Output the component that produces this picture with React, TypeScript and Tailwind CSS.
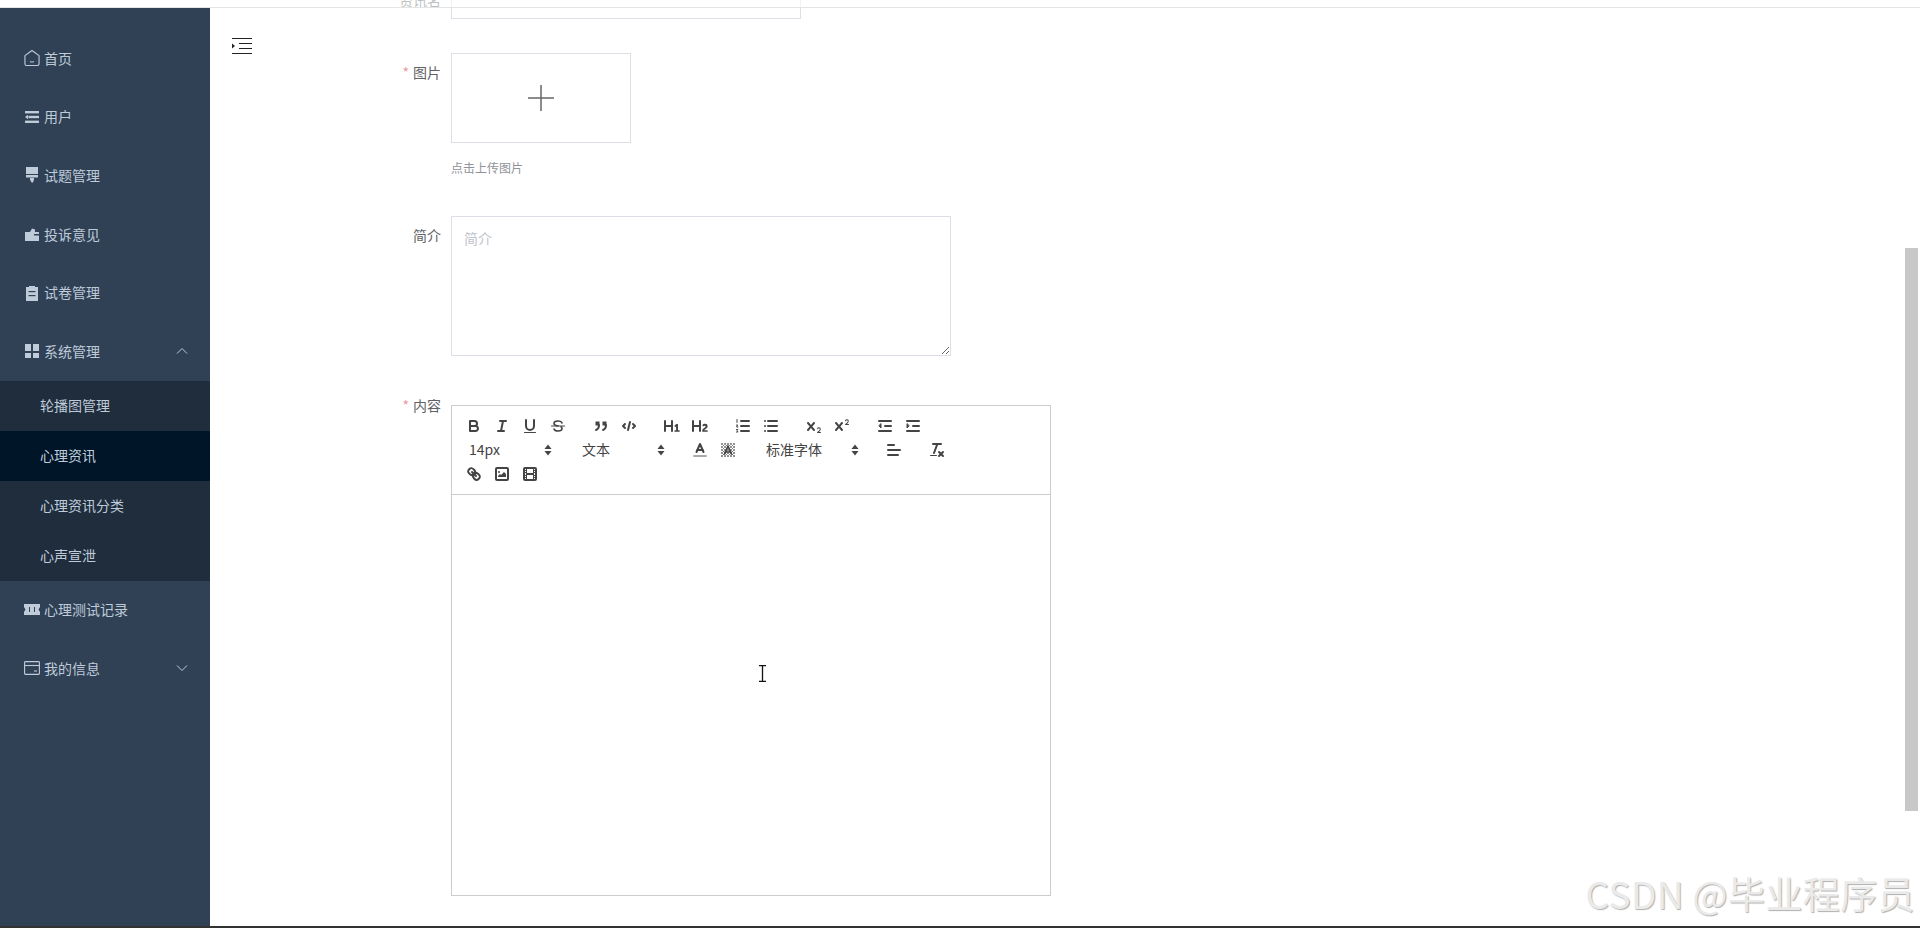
import React from "react";

const S = "#444";
const cn = "Noto Sans CJK SC";

function Q({ children, w = 18, h = 18 }: { children: React.ReactNode; w?: number; h?: number }) {
  return (
    <svg width={w} height={h} viewBox="0 0 18 18" fill="none" stroke={S} strokeWidth={2} strokeLinecap="round" strokeLinejoin="round">
      {children}
    </svg>
  );
}

const fill = { fill: S, stroke: "none" };
const thin = { strokeWidth: 1 };

const icons: Record<string, React.ReactNode> = {
  bold: (<><path d="M5,4H9.5A2.5,2.5,0,0,1,12,6.5v0A2.5,2.5,0,0,1,9.5,9H5V4Z" /><path d="M5,9h5.5A2.5,2.5,0,0,1,13,11.5v0A2.5,2.5,0,0,1,10.5,14H5V9Z" /></>),
  italic: (<><line x1="7" x2="13" y1="4" y2="4" /><line x1="5" x2="11" y1="14" y2="14" /><line x1="8" x2="10" y1="14" y2="4" /></>),
  underline: (<><path d="M5,3V9a4,4,0,0,0,4,4H9a4,4,0,0,0,4-4V3" /><rect x="3" y="15" width="12" height="1" rx=".5" {...fill} /></>),
  strike: (<><line x1="15.5" x2="2.5" y1="9" y2="9" strokeWidth={1.2} /><path d="M13 6C12.6 4.700 11 4 9 4 6.800 4 5 5 5 6.500c0 1.200 1 2 4 2.500M5 12c.4 1.300 2 2 4 2 2.200 0 4-1 4-2.500 0-.7-.3-1.300-1-1.700" strokeWidth={1.600} /></>),
  quote: (<><rect x="3.500" y="4.500" width="4" height="4" {...fill} /><rect x="10.500" y="4.500" width="4" height="4" {...fill} /><path d="M7,8c0,4-3,5-3,5" /><path d="M14,8c0,4-3,5-3,5" /></>),
  code: (<><polyline points="5 7 3 9 5 11" /><polyline points="13 7 15 9 13 11" /><line x1="10" x2="8" y1="5" y2="13" /></>),
  h1: (<path {...fill} d="M10,4V14a1,1,0,0,1-2,0V10H3v4a1,1,0,0,1-2,0V4A1,1,0,0,1,3,4V8H8V4a1,1,0,0,1,2,0Zm6.06787,9.209H14.98975V7.59863a.54085.54085,0,0,0-.605-.60547h-.62744a1.01119,1.01119,0,0,0-.748.29688L11.645,8.56641a.5435.5435,0,0,0-.022.8584l.28613.30762a.53861.53861,0,0,0,.84717.0332l.09912-.08789a1.2137,1.2137,0,0,0,.2417-.35254h.02246s-.01123.30859-.01123.60547V13.209H12.041a.54085.54085,0,0,0-.605.60547v.43945a.54085.54085,0,0,0,.605.60547h4.02686a.54085.54085,0,0,0,.605-.60547v-.43945A.54085.54085,0,0,0,16.06787,13.209Z" />),
  h2: (<path {...fill} d="M16.73975,13.81445v.43945a.54085.54085,0,0,1-.605.60547H11.855a.58392.58392,0,0,1-.64893-.60547V14.0127c0-2.90527,3.39941-3.42187,3.39941-4.55469a.77675.77675,0,0,0-.84717-.78125,1.17684,1.17684,0,0,0-.83594.38477c-.2749.26367-.561.374-.85791.13184l-.4292-.34082c-.30811-.24219-.38525-.51758-.1543-.81445a2.97155,2.97155,0,0,1,2.45361-1.17676,2.45393,2.45393,0,0,1,2.68408,2.40918c0,2.45312-3.1792,2.92676-3.27832,3.93848h2.79443A.54085.54085,0,0,1,16.73975,13.81445ZM9,3A.99974.99974,0,0,0,8,4V8H3V4A1,1,0,0,0,1,4V14a1,1,0,0,0,2,0V10H8v4a1,1,0,0,0,2,0V4A.99974.99974,0,0,0,9,3Z" />),
  ol: (<><line x1="7" x2="15" y1="4" y2="4" /><line x1="7" x2="15" y1="9" y2="9" /><line x1="7" x2="15" y1="14" y2="14" /><path d="M3 2.500v3M2.500 8h1.200l-1.200 2h1.400M2.500 12.500h1.400l-.7 1 .7 1.500H2.500" {...thin} /></>),
  ul: (<><line x1="6" x2="15" y1="4" y2="4" /><line x1="6" x2="15" y1="9" y2="9" /><line x1="6" x2="15" y1="14" y2="14" /><line x1="3" x2="3" y1="4" y2="4" /><line x1="3" x2="3" y1="9" y2="9" /><line x1="3" x2="3" y1="14" y2="14" /></>),
  sub: (<><path {...fill} d="M15.5,15H13.861a3.858,3.858,0,0,0,1.914-2.975,1.8,1.8,0,0,0-1.6-1.751A1.921,1.921,0,0,0,12.021,11.7a0.50013,0.50013,0,1,0,.957.291h0a0.914,0.914,0,0,1,1.053-.725,0.81,0.81,0,0,1,.744.762c0,1.076-1.16971,1.86982-1.93971,2.43082A1.45639,1.45639,0,0,0,12,15.5a0.5,0.5,0,0,0,.5.5h3A0.5,0.5,0,0,0,15.5,15Z" /><path {...fill} d="M9.65,5.241a1,1,0,0,0-1.409.108L6,7.964,3.759,5.349A1,1,0,0,0,2.192,6.59178Q2.21541,6.6213,2.241,6.649L4.684,9.5,2.241,12.35A1,1,0,0,0,3.71,13.70722q0.02557-.02768.049-0.05722L6,11.036,8.241,13.65a1,1,0,1,0,1.567-1.24277Q9.78459,12.3777,9.759,12.35L7.316,9.5,9.759,6.651A1,1,0,0,0,9.65,5.241Z" /></>),
  sup: (<><path {...fill} d="M15.5,7H13.861a4.015,4.015,0,0,0,1.914-2.975,1.8,1.8,0,0,0-1.6-1.751A1.922,1.922,0,0,0,12.021,3.7a0.5,0.5,0,1,0,.957.291,0.917,0.917,0,0,1,1.053-.725,0.81,0.81,0,0,1,.744.762c0,1.077-1.164,1.925-1.934,2.486A1.423,1.423,0,0,0,12,7.5a0.5,0.5,0,0,0,.5.5h3A0.5,0.5,0,0,0,15.5,7Z" /><path {...fill} d="M9.651,5.241a1,1,0,0,0-1.41.108L6,7.964,3.759,5.349a1,1,0,1,0-1.519,1.3L4.683,9.5,2.241,12.35a1,1,0,1,0,1.519,1.3L6,11.036l2.241,2.616a1,1,0,0,0,1.519-1.3L7.317,9.5,9.759,6.651A1,1,0,0,0,9.651,5.241Z" /></>),
  outdent: (<><line x1="3" x2="15" y1="14" y2="14" /><line x1="3" x2="15" y1="4" y2="4" /><line x1="9" x2="15" y1="9" y2="9" /><polygon points="5 7 5 11 3 9" fill={S} strokeWidth={1} /></>),
  indent: (<><line x1="3" x2="15" y1="14" y2="14" /><line x1="3" x2="15" y1="4" y2="4" /><line x1="9" x2="15" y1="9" y2="9" /><polygon points="3 7 3 11 5 9" fill={S} strokeWidth={1} /></>),
  color: (<><line x1="3" x2="15" y1="15" y2="15" stroke="#aaa" /><polyline points="5.500 11 9 3 12.500 11" /><line x1="11.630" x2="6.380" y1="9" y2="9" /></>),
  bg: (<>
    <g stroke="#777" strokeWidth={0.8} strokeLinecap="butt">
      <path d="M2 2l14 14M2 5l11 11M2 8l8 8M2 11l5 5M2 14l2 2M5 2l11 11M8 2l8 8M11 2l5 5M14 2l2 2M16 2L2 16M13 2L2 13M10 2L2 10M7 2L2 7M4 2L2 4M16 5L5 16M16 8l-8 8M16 11l-5 5M16 14l-2 2" />
    </g>
    <polyline points="5.500 13 9 5 12.500 13" strokeWidth={1.700} />
    <line x1="11.630" x2="6.380" y1="11" y2="11" strokeWidth={1.700} />
  </>),
  align: (<><line x1="3" x2="15" y1="9" y2="9" /><line x1="3" x2="13" y1="14" y2="14" /><line x1="3" x2="9" y1="4" y2="4" /></>),
  clean: (<><line x1="5" x2="13" y1="3" y2="3" /><line x1="6" x2="9.350" y1="12" y2="3" /><line x1="11" x2="15" y1="11" y2="15" /><line x1="15" x2="11" y1="11" y2="15" /><rect x="2" y="14" width="7" height="1" rx=".5" {...fill} /></>),
  link: (<><line x1="7" x2="11" y1="7" y2="11" /><path d="M8.900,4.577a3.476,3.476,0,0,1,.36,4.679A3.476,3.476,0,0,1,4.577,8.900C3.185,7.500,2.035,6.400,4.217,4.217S7.500,3.185,8.900,4.577Z" /><path d="M13.423,9.100a3.476,3.476,0,0,0-4.679-.36,3.476,3.476,0,0,0,.36,4.679c1.392,1.392,2.500,2.542,4.679.36S14.815,10.500,13.423,9.100Z" /></>),
  image: (<><rect x="3" y="3" width="12" height="12" rx="1" /><circle cx="6" cy="7" r="1" {...fill} /><polyline points="5 12 5 11 7 9 8 10 11 7 13 9 13 12 5 12" {...fill} /></>),
  video: (<><rect x="3" y="3" width="12" height="12" rx="1" /><rect x="5" y="3" width="1" height="12" {...fill} /><rect x="12" y="3" width="1" height="12" {...fill} /><rect x="5" y="8" width="8" height="2" {...fill} /><rect x="3" y="5" width="3" height="1" {...fill} /><rect x="3" y="7" width="3" height="1" {...fill} /><rect x="3" y="10" width="3" height="1" {...fill} /><rect x="3" y="12" width="3" height="1" {...fill} /><rect x="12" y="5" width="3" height="1" {...fill} /><rect x="12" y="7" width="3" height="1" {...fill} /><rect x="12" y="10" width="3" height="1" {...fill} /><rect x="12" y="12" width="3" height="1" {...fill} /></>),
};

function Btn({ name }: { name: string }) {
  return (
    <span className="w-[28px] h-[24px] flex items-center justify-center shrink-0">
      <Q>{icons[name]}</Q>
    </span>
  );
}

function Group({ names }: { names: string[] }) {
  return (
    <span className="flex mr-[15px]">
      {names.map((n) => (
        <Btn key={n} name={n} />
      ))}
    </span>
  );
}

function Picker({ label, w }: { label: string; w: string }) {
  return (
    <span className={`${w} h-[24px] flex items-center justify-between pl-[9px] pr-[5px] mr-[15px] text-[14px] leading-[22px] text-[#444] shrink-0`}>
      <span className="-mt-[2px]">{label}</span>
      <svg width="10" height="14" viewBox="0 0 10 14">
        <polygon points="5,1.500 8.500,6 1.500,6" fill={S} />
        <polygon points="5,12.500 8.500,8 1.500,8" fill={S} />
      </svg>
    </span>
  );
}

const menuIcon: Record<string, React.ReactNode> = {
  home: (
    <svg width="17" height="18" viewBox="0 0 17 18" fill="none" stroke="#bfcbd9" strokeWidth="1.200" strokeLinejoin="round">
      <path d="M1 6.500 8.500 1 16 6.500v8.700a1.800 1.800 0 0 1-1.800 1.800H2.800A1.800 1.800 0 0 1 1 15.200z" />
      <path d="M6.500 12.500c1 1 3 1 4 0" />
    </svg>
  ),
  list: (
    <svg width="14" height="12" viewBox="0 0 14 12" fill="#bfcbd9">
      <rect x="0" y="0" width="14" height="2.400" />
      <rect x="3.500" y="4.800" width="10.500" height="2.400" />
      <polygon points="0,6 3,3.800 3,8.200" />
      <rect x="0" y="9.600" width="14" height="2.400" />
    </svg>
  ),
  brush: (
    <svg width="14" height="16" viewBox="0 0 14 16" fill="#bfcbd9">
      <rect x="1" y="0" width="12" height="7" />
      <rect x="1" y="8" width="12" height="2.500" />
      <path d="M5 11h4v1.500L8 15.500H6.500L5 12.500z" />
    </svg>
  ),
  complaint: (
    <svg width="14" height="14" viewBox="0 0 14 14" fill="#bfcbd9">
      <path d="M0 5h5l2-3.500 3 1V5h4v9H0z" />
      <rect x="9" y="7" width="5" height="1.500" fill="#304156" />
    </svg>
  ),
  paper: (
    <svg width="14" height="16" viewBox="0 0 14 16" fill="#bfcbd9">
      <path d="M1 2h3V1h6v1h3v14H1z" />
      <rect x="3.500" y="6" width="7" height="1.200" fill="#304156" />
      <rect x="3.500" y="10" width="7" height="1.200" fill="#304156" />
    </svg>
  ),
  grid: (
    <svg width="14" height="14" viewBox="0 0 14 14" fill="#bfcbd9">
      <rect x="0" y="0" width="6" height="7" />
      <rect x="8" y="0" width="6" height="7" />
      <rect x="0" y="9" width="6" height="5" />
      <rect x="8" y="9" width="6" height="5" />
    </svg>
  ),
  ticket: (
    <svg width="16" height="11" viewBox="0 0 16 11" fill="#bfcbd9">
      <path d="M0 0h16v3l-1.500 2.500L16 8v3H0V8l1.500-2.500L0 3z" />
      <path d="M5 3h1v5H5zM10 3h1v5h-1z" fill="#304156" />
    </svg>
  ),
  wallet: (
    <svg width="16" height="14" viewBox="0 0 16 14" fill="none" stroke="#bfcbd9" strokeWidth="1.100">
      <rect x="0.600" y="0.600" width="14.800" height="12.800" rx="0.800" />
      <line x1="0.600" y1="4.500" x2="15.400" y2="4.500" />
      <line x1="10" y1="10" x2="13" y2="10" />
    </svg>
  ),
};

function Chevron({ up }: { up?: boolean }) {
  return (
    <svg width="12" height="12" viewBox="0 0 12 12" fill="none" stroke="#bfcbd9" strokeWidth="1" className="absolute right-[22px]">
      <path d={up ? "M1 8.500 6 3.500l5 5" : "M1 3.500l5 5 5-5"} />
    </svg>
  );
}

function MenuItem({ icon, label, chev }: { icon: string; label: string; chev?: "up" | "down" }) {
  return (
    <div className="relative h-[58.6px] flex items-center pl-[24px] text-[14px] text-[#bfcbd9]">
      <span className="w-[16px] flex justify-center mr-[4px] shrink-0">{menuIcon[icon]}</span>
      <span>{label}</span>
      {chev && <Chevron up={chev === "up"} />}
    </div>
  );
}

function SubItem({ label, active }: { label: string; active?: boolean }) {
  return (
    <div className={`h-[50px] flex items-center pl-[40px] text-[14px] text-[#bfcbd9] ${active ? "bg-[#001528]" : "bg-[#1f2d3d]"}`}>
      {label}
    </div>
  );
}

function Label({ text, required }: { text: string; required?: boolean }) {
  return (
    <label className="block w-[241px] shrink-0 pr-[10px] h-[38px] leading-[38px] text-right text-[14px] text-[#606266]">
      {required && <span className="text-[#ec9a9a] mr-[4px]">*</span>}
      {text}
    </label>
  );
}

export default function App() {
  return (
    <div className="h-screen flex flex-col overflow-hidden bg-white" style={{ fontFamily: `"${cn}", "Liberation Sans", sans-serif` }}>
      <div className="relative z-10 h-[8px] shrink-0 bg-white/60 border-b border-[#e4e4e4]" />
      <div className="flex flex-1 min-h-0">
        <aside className="w-[210px] shrink-0 bg-[#304156] pt-[21px]">
          <MenuItem icon="home" label="首页" />
          <MenuItem icon="list" label="用户" />
          <MenuItem icon="brush" label="试题管理" />
          <MenuItem icon="complaint" label="投诉意见" />
          <MenuItem icon="paper" label="试卷管理" />
          <MenuItem icon="grid" label="系统管理" chev="up" />
          <SubItem label="轮播图管理" />
          <SubItem label="心理资讯" active />
          <SubItem label="心理资讯分类" />
          <SubItem label="心声宣泄" />
          <MenuItem icon="ticket" label="心理测试记录" />
          <MenuItem icon="wallet" label="我的信息" chev="down" />
        </aside>
        <main className="relative -mt-[8px] flex-1 min-w-0 overflow-hidden bg-white">
          <svg width="21" height="17" viewBox="0 0 21 17" className="absolute left-[22px] top-[38px]">
            <g stroke="#222" strokeWidth="1">
              <line x1="0" x2="20" y1="0.500" y2="0.500" />
              <line x1="7" x2="20" y1="5.500" y2="5.500" />
              <line x1="7" x2="20" y1="10.500" y2="10.500" />
              <line x1="0" x2="20" y1="15.500" y2="15.500" />
            </g>
            <polygon points="0,5.500 3,8 0,10.500" fill="#222" />
          </svg>

          <div className="-mt-[21px]">
            <div className="flex h-[40px]">
              <div className="shrink-0 mt-[2px]">
                <Label text="资讯名" />
              </div>
              <div className="w-[350px] h-[40px] border border-[#dcdfe6]" />
            </div>

            <div className="flex mt-[34px]">
              <Label text="图片" required />
              <div className="flex flex-col">
                <div className="w-[180px] h-[90px] border border-[#dcdfe6] flex items-center justify-center">
                  <svg width="26" height="26" viewBox="0 0 26 26" stroke="#666" strokeWidth="1.500">
                    <line x1="13" x2="13" y1="0" y2="26" />
                    <line x1="0" x2="26" y1="13" y2="13" />
                  </svg>
                </div>
                <div className="mt-[16px] text-[12px] leading-[18px] text-[#909399]">点击上传图片</div>
              </div>
            </div>

            <div className="flex mt-[39px]">
              <Label text="简介" />
              <textarea
                placeholder="简介"
                className="w-[500px] h-[140px] border border-[#dcdfe6] px-[12px] pt-[11px] pb-[9px] text-[14px] leading-[20px] text-[#606266] placeholder:text-[#c0c4cc] outline-none"
              />
            </div>

            <div className="flex mt-[49px]">
              <div className="shrink-0 -mt-[19px]">
                <Label text="内容" required />
              </div>
              <div className="w-[600px]">
                <div className="border border-[#ccc] p-[8px] h-[90px]">
                  <div className="flex flex-wrap">
                    <Group names={["bold", "italic", "underline", "strike"]} />
                    <Group names={["quote", "code"]} />
                    <Group names={["h1", "h2"]} />
                    <Group names={["ol", "ul"]} />
                    <Group names={["sub", "sup"]} />
                    <Group names={["outdent", "indent"]} />
                  </div>
                  <div className="flex">
                    <Picker label="14px" w="w-[98px]" />
                    <Picker label="文本" w="w-[98px]" />
                    <Group names={["color", "bg"]} />
                    <Picker label="标准字体" w="w-[108px]" />
                    <Group names={["align"]} />
                    <Group names={["clean"]} />
                  </div>
                  <div className="flex">
                    <Group names={["link", "image", "video"]} />
                  </div>
                </div>
                <div className="h-[401px] border border-t-0 border-[#ccc]" />
              </div>
            </div>
          </div>

          <svg width="9" height="17" viewBox="0 0 9 17" className="absolute left-[548px] top-[665px]" stroke="#111" fill="none" strokeWidth="1.300">
            <path d="M1 .700h7M1 16.300h7M4.500 .700v15.600" />
          </svg>

          <div className="absolute right-[2px] top-[248px] w-[13px] h-[563px] bg-[#c8c8c8]" />

          <div className="absolute right-[5px] bottom-[8px] text-[37px] leading-[50px] tracking-[0.4px] text-[#eaeaea] [text-shadow:1px_1px_1px_#b0b0b0] whitespace-nowrap">
            CSDN @毕业程序员
          </div>
        </main>
      </div>
      <div className="h-[2px] shrink-0 bg-[#333]" />
    </div>
  );
}
